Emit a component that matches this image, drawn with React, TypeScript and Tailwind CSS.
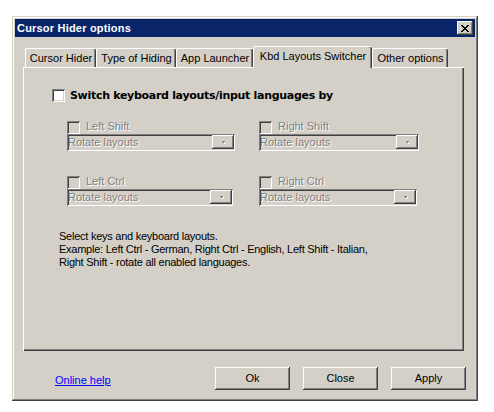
import React from "react";

const raised =
  "shadow-[inset_-1px_-1px_#404040,inset_1px_1px_#ffffff,inset_-2px_-2px_#808080,inset_2px_2px_#d4d0c8]";
const sunken =
  "shadow-[inset_1px_1px_#808080,inset_-1px_-1px_#ffffff,inset_2px_2px_#404040,inset_-2px_-2px_#d4d0c8]";

function CheckBox({ disabled }: { disabled?: boolean }) {
  return (
    <div
      className={`w-[13px] h-[13px] shrink-0 ${sunken} ${disabled ? "bg-[#d4d0c8]" : "bg-white"}`}
    />
  );
}

function Combo({ width }: { width: number }) {
  return (
    <div
      className={`flex h-[17px] bg-[#d4d0c8] ${sunken} p-[2px] pr-[1px]`}
      style={{ width }}
    >
      <div className="flex-1 flex items-center text-[11px] leading-none text-[#808080] [text-shadow:1px_1px_0_#ffffff] -ml-[1px]">
        Rotate layouts
      </div>
      <div className={`w-[22px] h-[14px] -mt-[1px] bg-[#d4d0c8] ${raised} flex items-center justify-center`}>
        <svg width="7" height="4" viewBox="0 0 7 4">
          <path d="M2 1h3v1h-1v1h-1v-1h-1z" fill="#808080" />
          <path d="M4 3h1v-1h1v1h-1v1h-1z" fill="#ffffff" />
        </svg>
      </div>
    </div>
  );
}

function KeyOption({ label, width }: { label: string; width: number }) {
  return (
    <div className="flex flex-col">
      <div className="flex items-center h-[13px]">
        <CheckBox disabled />
        <span className="ml-[6px] -mt-[3px] text-[11px] leading-none text-[#808080] [text-shadow:1px_1px_0_#ffffff]">
          {label}
        </span>
      </div>
      <Combo width={width} />
    </div>
  );
}

function Tab({ label, width, active }: { label: string; width: number; active?: boolean }) {
  if (active) {
    return (
      <div
        className="relative z-10 h-[22px] -mb-[1px] bg-[#d4d0c8] border-t border-l border-white rounded-tl-[2px] rounded-tr-[2px] shadow-[inset_-1px_0_#404040,inset_-2px_0_#808080] flex items-start justify-center pt-[4px] text-[11px] leading-none text-black"
        style={{ width }}
      >
        {label}
      </div>
    );
  }
  return (
    <div
      className="h-[19px] bg-[#d4d0c8] border-t border-l border-white rounded-tl-[2px] rounded-tr-[2px] shadow-[inset_-1px_0_#404040,inset_-2px_0_#808080] flex items-start justify-center pt-[4px] text-[11px] leading-none text-black"
      style={{ width }}
    >
      {label}
    </div>
  );
}

function Button({ label }: { label: string }) {
  return (
    <div
      className={`w-[75px] h-[23px] bg-[#d4d0c8] ${raised} flex items-center justify-center text-[11px] leading-none text-black`}
    >
      {label}
    </div>
  );
}

export default function App() {
  return (
    <div
      className="w-[494px] h-[412px] bg-white pt-[16px] pl-[12px]"
      style={{ fontFamily: '"Liberation Sans", Arial, sans-serif' }}
    >
      <div
        className="w-[466px] h-[385px] bg-[#d4d0c8] p-[3px] flex flex-col shadow-[inset_-1px_-1px_#404040,inset_1px_1px_#d4d0c8,inset_-2px_-2px_#808080,inset_2px_2px_#ffffff]"
      >
        {/* Title bar */}
        <div className="h-[18px] bg-[#0a246a] flex items-center justify-between pl-[2px] pr-[2px]">
          <span className="text-white font-bold text-[11px] leading-none tracking-[0.2px]">Cursor Hider options</span>
          <div className={`w-[16px] h-[14px] bg-[#d4d0c8] ${raised} flex items-center justify-center`}>
            <svg width="8" height="7" viewBox="0 0 8 7">
              <path
                d="M0 0h2v1h1v1h2v-1h1v-1h2v1h-1v1h-1v1h-1v1h1v1h1v1h1v1h-2v-1h-1v-1h-2v1h-1v1h-2v-1h1v-1h1v-1h1v-1h-1v-1h-1v-1h-1z"
                fill="#000"
              />
            </svg>
          </div>
        </div>

        {/* Body */}
        <div className="pl-[8px] mt-[9px] flex flex-col">
          <div className="flex items-end pl-[2px]">
            <Tab label="Cursor Hider" width={71} />
            <Tab label="Type of Hiding" width={80} />
            <Tab label="App Launcher" width={77} />
            <Tab label="Kbd Layouts Switcher" width={119} active />
            <Tab label="Other options" width={76} />
          </div>
          <div className="w-[441px] h-[284px] border-t border-l border-white shadow-[inset_-1px_-1px_#404040,inset_-2px_-2px_#808080] flex flex-col">
            <div className="flex items-center ml-[28px] mt-[21px] h-[13px]">
              <CheckBox />
              <span
                className="ml-[5px] -mt-[1px] text-[11px] font-bold leading-none tracking-[-0.3px] text-black"
                style={{ fontFamily: '"DejaVu Sans", Verdana, sans-serif' }}
              >
                Switch keyboard layouts/input languages by
              </span>
            </div>
            <div className="ml-[43px] mt-[19px] grid grid-cols-[168px_160px] gap-x-[24px] gap-y-[25px]">
              <KeyOption label="Left Shift" width={168} />
              <KeyOption label="Right Shift" width={160} />
              <KeyOption label="Left Ctrl" width={166} />
              <KeyOption label="Right Ctrl" width={158} />
            </div>
            <div className="ml-[35px] mt-[24px] text-[11px] leading-[13px] tracking-[-0.25px] text-black">
              <div>Select keys and keyboard layouts.</div>
              <div>Example: Left Ctrl - German, Right Ctrl - English, Left Shift - Italian,</div>
              <div>Right Shift - rotate all enabled languages.</div>
            </div>
          </div>
          <div className="flex items-center mt-[16px]">
            <a className="ml-[32px] mt-[4px] text-[11px] leading-none text-[#0000ff] underline">Online help</a>
            <div className="ml-auto mr-[9px] flex gap-[13px]">
              <Button label="Ok" />
              <Button label="Close" />
              <Button label="Apply" />
            </div>
          </div>
        </div>
      </div>
    </div>
  );
}
